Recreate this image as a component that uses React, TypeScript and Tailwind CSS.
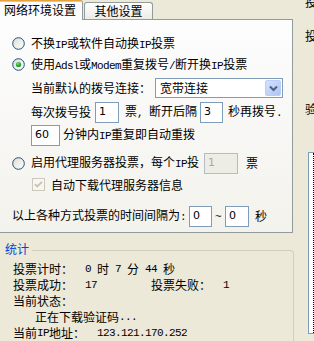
import React from "react";

const M = ({ children }: { children: React.ReactNode }) => (
  <span className="font-['Liberation_Mono',monospace] text-[11px] tracking-[-0.6px] whitespace-pre">{children}</span>
);

const Radio = ({ checked }: { checked?: boolean }) => (
  <svg width="13" height="13" viewBox="0 0 13 13" className="shrink-0">
    <defs>
      <linearGradient id={checked ? "rg1" : "rg0"} x1="0" y1="0" x2="1" y2="1">
        <stop offset="0" stopColor="#dcdcd4" />
        <stop offset="1" stopColor="#ffffff" />
      </linearGradient>
      <radialGradient id="gd" cx="0.4" cy="0.35" r="0.7">
        <stop offset="0" stopColor="#8ee08e" />
        <stop offset="0.5" stopColor="#2fb52f" />
        <stop offset="1" stopColor="#158a15" />
      </radialGradient>
    </defs>
    <circle cx="6.5" cy="6.5" r="5.8" fill={`url(#${checked ? "rg1" : "rg0"})`} stroke="#1c5180" strokeWidth="1" />
    {checked && <circle cx="6.5" cy="6.5" r="2.6" fill="url(#gd)" />}
  </svg>
);

const CheckDisabled = () => (
  <svg width="13" height="13" viewBox="0 0 13 13" className="shrink-0">
    <rect x="0.5" y="0.5" width="12" height="12" fill="#f7f6f1" stroke="#cac8bb" />
    <path d="M3 6.2 L5.2 8.5 L10 3.8" fill="none" stroke="#c4c2b4" strokeWidth="1.8" />
  </svg>
);

const Input = ({ value, w, disabled }: { value: string; w: string; disabled?: boolean }) => (
  <div
    className={`${w} h-[21px] flex items-center pl-[3px] font-['DejaVu_Sans',sans-serif] text-[11px] border ${
      disabled ? "bg-[#eeede5] border-[#b4bcc6] text-[#aca899]" : "bg-white border-[#7f9db9] text-black"
    }`}
  >
    {value}
  </div>
);

export default function App() {
  return (
    <div className="w-[314px] h-[341px] overflow-hidden bg-[#ece9d8] flex text-[12px] leading-[16px] text-black font-['Noto_Sans_CJK_SC','Liberation_Sans',sans-serif]">
      {/* left column */}
      <div className="w-[294px] shrink-0 flex flex-col">
        {/* tabs */}
        <div className="flex items-end h-[19px]">
          <div className="relative z-10 w-[83px] h-[20px] -mb-px bg-[#fcfcfe] border-r border-[#919b9c] rounded-tr-[3px] flex flex-col">
            <div className="h-px bg-[#e6a23a] rounded-tr-[3px]" />
            <div className="h-px bg-[#ffc83c]" />
            <div className="flex-1 flex items-center justify-center pr-[2px] pb-[2px]">网络环境设置</div>
          </div>
          <div className="ml-[1px] w-[69px] h-[17px] border-t border-l border-r border-[#919b9c] rounded-t-[3px] bg-gradient-to-b from-[#ffffff] to-[#ecebe6] flex items-center justify-center">
            其他设置
          </div>
        </div>
        {/* panel */}
        <div className="w-[293px] h-[217px] border-t border-r border-b border-[#919b9c] bg-gradient-to-b from-[#fdfdfe] to-[#f3f2ec] pl-[12px] pt-[13px]">
          <div className="h-[21px] flex items-center">
            <Radio />
            <span className="ml-[6px]">
              不换<M>IP</M>或软件自动换<M>IP</M>投票
            </span>
          </div>
          <div className="h-[21px] flex items-center">
            <Radio checked />
            <span className="ml-[6px]">
              使用<M>Adsl</M>或<M>Modem</M>重复拨号<M>/</M>断开换<M>IP</M>投票
            </span>
          </div>
          <div className="pl-[19px]">
            <div className="mt-[2px] h-[22px] flex items-center">
              <span>当前默认的拨号连接：</span>
              <div className="ml-[4px] w-[128px] h-[20px] border border-[#7f9db9] bg-white flex items-center pl-[4px] pr-px">
                <span className="flex-1">宽带连接</span>
                <div className="w-[16px] h-[16px] rounded-[2px] border border-[#b9cdf6] bg-gradient-to-br from-[#d6e2fd] to-[#aec4f5] flex items-center justify-center">
                  <svg width="9" height="7" viewBox="0 0 9 7">
                    <path d="M1 1.5 L4.5 5 L8 1.5" fill="none" stroke="#4d6185" strokeWidth="2" />
                  </svg>
                </div>
              </div>
            </div>
            <div className="mt-[2px] h-[22px] flex items-center">
              <span>每次拨号投</span>
              <div className="ml-[4px]">
                <Input value="1" w="w-[24px]" />
              </div>
              <span className="ml-[6px]">
                票<M>, </M>断开后隔
              </span>
              <div className="ml-[3px]">
                <Input value="3" w="w-[23px]" />
              </div>
              <span className="ml-[5px]">
                秒再拨号<M>.</M>
              </span>
            </div>
            <div className="mt-[1px] h-[22px] flex items-center">
              <Input value="60" w="w-[29px]" />
              <span className="ml-[3px]">
                分钟内<M>IP</M>重复即自动重拨
              </span>
            </div>
          </div>
          <div className="mt-[6px] h-[22px] flex items-center">
            <Radio />
            <span className="ml-[6px]">
              启用代理服务器投票，每个<M>IP</M>投
            </span>
            <div className="ml-[5px]">
              <Input value="1" w="w-[34px]" disabled />
            </div>
            <span className="ml-[8px]">票</span>
          </div>
          <div className="h-[21px] flex items-center pl-[20px]">
            <CheckDisabled />
            <span className="ml-[6px]">自动下载代理服务器信息</span>
          </div>
          <div className="mt-[10px] h-[22px] flex items-center">
            <span>
              以上各种方式投票的时间间隔为<M>:</M>
            </span>
            <div className="ml-[3px]">
              <Input value="0" w="w-[23px]" />
            </div>
            <span className="ml-[3px]">
              <M>~</M>
            </span>
            <div className="ml-[4px]">
              <Input value="0" w="w-[24px]" />
            </div>
            <span className="ml-[6px]">秒</span>
          </div>
        </div>
        {/* statistics group */}
        <div className="mt-[8px] flex h-[16px]">
          <span className="ml-[5px] text-[#0046d5]">统计</span>
          <div className="ml-[3px] mt-[9px] flex-1 border-t border-r border-[#d0d0bf] rounded-tr-[4px]" />
        </div>
        <div className="flex-1 border-r border-[#d0d0bf] pl-[13px] pt-[4px]">
          <div className="h-[16px] flex items-center whitespace-pre">
            <span>投票计时：</span>
            <M>  0 </M>
            <span>时</span>
            <M> 7 </M>
            <span>分</span>
            <M> 44 </M>
            <span>秒</span>
          </div>
          <div className="h-[16px] flex items-center">
            <span className="w-[138px] flex items-center">
              <span>投票成功：</span>
              <M>  17</M>
            </span>
            <span>投票失败：</span>
            <M>  1</M>
          </div>
          <div className="h-[16px] flex items-center">当前状态：</div>
          <div className="h-[16px] flex items-center pl-[22px]">
            <span>正在下载验证码</span>
            <M>...</M>
          </div>
          <div className="h-[16px] flex items-center">
            <span>当前</span>
            <M>IP</M>
            <span>地址：</span>
            <M>  123.121.170.252</M>
          </div>
        </div>
      </div>
      {/* right column (clipped) */}
      <div className="flex-1 min-w-0 overflow-hidden flex flex-col">
        <div className="pl-[11px] -mt-[6px] h-[16px] whitespace-nowrap">投票地址</div>
        <div className="pl-[11px] mt-[18px] h-[16px] whitespace-nowrap">投票选项</div>
        <div className="pl-[11px] mt-[57px] h-[16px] whitespace-nowrap">验证码</div>
        <div className="ml-[14px] mt-[35px] w-[30px] h-[182px] border border-[#7f9db9] bg-white shrink-0">
          <div className="ml-[4px] h-full border-l border-dotted border-black" />
        </div>
      </div>
    </div>
  );
}
